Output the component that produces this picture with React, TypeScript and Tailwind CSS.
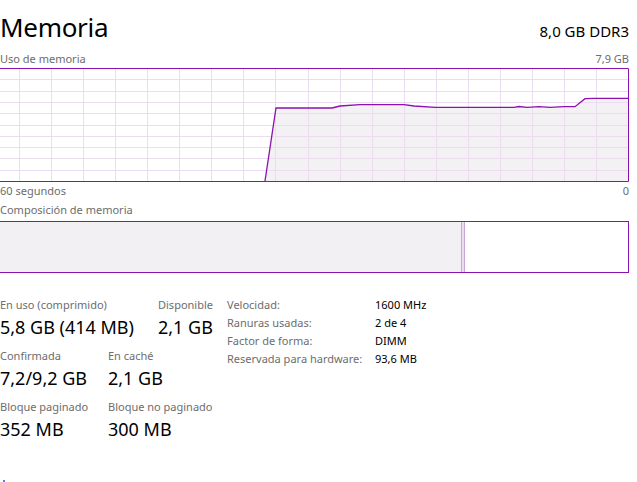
import React from 'react'

const purple = '#8b12ae'

const usage: [number, number][] = [
  [265, 113], [276, 40], [332, 40], [340, 38], [360, 36.7], [404, 36.7], [414, 38],
  [435, 39.3], [514, 39.3], [519, 38.5], [527, 39.3], [539, 38.7], [550, 39.3],
  [564, 38.7], [575, 38.7], [585, 30.7], [594, 30.3], [628, 30.3],
]

function UsageGraph() {
  const line = usage.map(([x, y]) => `${x},${y}`).join(' ')
  const cols = Array.from({ length: 19 }, (_, i) => Math.round(19 + i * 32.06) + 0.5)
  const rows = Array.from({ length: 9 }, (_, i) => Math.round(11.3 * (i + 1)) + 0.5)
  return (
    <svg width="629" height="114" viewBox="0 0 629 114" className="block">
      <polygon points={`${line} 628,113 265,113`} fill="#f4f1f5" />
      {cols.map((x) => (
        <line key={'c' + x} x1={x} y1={0} x2={x} y2={114} stroke="#ebdcef" strokeWidth="1" />
      ))}
      {rows.map((y) => (
        <line key={'r' + y} x1={0} y1={y} x2={629} y2={y} stroke="#ebdcef" strokeWidth="1" />
      ))}
      <polyline points={line} fill="none" stroke={purple} strokeWidth="1.3" />
      <path d="M0 0.5 H628.5 V113.5 H0" fill="none" stroke={purple} strokeWidth="1" />
    </svg>
  )
}

function Stat({ label, value, width }: { label: string; value: string; width: string }) {
  return (
    <div className={`${width} pb-[6px]`}>
      <div className="text-[11px] leading-[15px] text-[#6d6d6d]">{label}</div>
      <div className="text-[18px] leading-[30px] text-black">{value}</div>
    </div>
  )
}

const details = [
  ['Velocidad:', '1600 MHz'],
  ['Ranuras usadas:', '2 de 4'],
  ['Factor de forma:', 'DIMM'],
  ['Reservada para hardware:', '93,6 MB'],
]

export default function App() {
  return (
    <div className="w-[637px] h-[482px] overflow-hidden bg-white font-['Noto_Sans',sans-serif] flex flex-col">
      <div className="w-[629px] h-[52px] flex justify-between items-baseline pt-[12px]">
        <div className="text-[26px] leading-[30px] text-black tracking-[-0.3px]">Memoria</div>
        <div className="text-[15px] leading-[30px] text-black">8,0 GB DDR3</div>
      </div>
      <div className="w-[629px] h-[16px] flex justify-between text-[11px] leading-[14px] text-[#6d6d6d]">
        <span>Uso de memoria</span>
        <span>7,9 GB</span>
      </div>
      <UsageGraph />
      <div className="w-[629px] h-[20px] pt-[2px] flex justify-between text-[11px] leading-[14px] text-[#6d6d6d]">
        <span>60 segundos</span>
        <span>0</span>
      </div>
      <div className="h-[19px] pt-px text-[11px] leading-[14px] text-[#6d6d6d]">Composición de memoria</div>
      <div className="w-[629px] h-[52px] flex border-y border-r border-[#8b12ae]">
        <div className="w-[461px] bg-[#f3f0f4]" />
        <div className="w-px bg-[#cba7d8]" />
        <div className="w-[2px] bg-[#ecdcf1]" />
        <div className="w-px bg-[#cba7d8]" />
        <div className="flex-1 bg-white" />
      </div>
      <div className="flex pt-[24px]">
        <div className="w-[227px]">
          <div className="flex">
            <Stat label="En uso (comprimido)" value="5,8 GB (414 MB)" width="w-[158px]" />
            <Stat label="Disponible" value="2,1 GB" width="flex-1" />
          </div>
          <div className="flex">
            <Stat label="Confirmada" value="7,2/9,2 GB" width="w-[108px]" />
            <Stat label="En caché" value="2,1 GB" width="flex-1" />
          </div>
          <div className="flex">
            <Stat label="Bloque paginado" value="352 MB" width="w-[108px]" />
            <Stat label="Bloque no paginado" value="300 MB" width="flex-1" />
          </div>
        </div>
        <div className="-mt-px text-[11px] leading-[18px]">
          {details.map(([k, v]) => (
            <div key={k} className="flex">
              <span className="w-[148px] text-[#6d6d6d]">{k}</span>
              <span className="text-black">{v}</span>
            </div>
          ))}
        </div>
      </div>
      <div className="mt-auto ml-[3px] w-[2px] h-[2px] bg-[#3a8ee6]" />
    </div>
  )
}
